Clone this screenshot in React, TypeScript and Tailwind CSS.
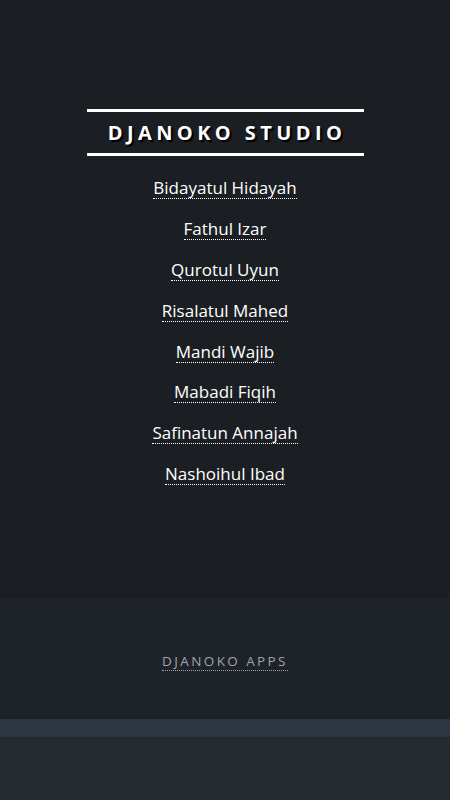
import React from 'react';

const books = [
    'Bidayatul Hidayah',
    'Fathul Izar',
    'Qurotul Uyun',
    'Risalatul Mahed',
    'Mandi Wajib',
    'Mabadi Fiqih',
    'Safinatun Annajah',
    'Nashoihul Ibad',
];

export default function App() {
    return (
        <div className="w-[450px] h-[800px] flex flex-col bg-[#262a31] font-['Open_Sans',sans-serif]">
            <main className="h-[598px] bg-[#1b1f23] flex flex-col items-center pt-[109px]">
                <h1 className="w-[277px] border-y-[3px] border-white py-[6px] text-center text-[20px] leading-[29px] font-bold text-white tracking-[4.4px] pl-[4px] [text-shadow:2px_2px_1px_#000]">
                    DJANOKO STUDIO
                </h1>
                <nav className="flex flex-col items-center gap-[18.9px] mt-[21px]">
                    {books.map((title) => (
                        <a
                            key={title}
                            href="#"
                            className="text-[17px] leading-[21px] text-white border-b border-dotted border-white"
                        >
                            {title}
                        </a>
                    ))}
                </nav>
            </main>
            <footer className="h-[121px] bg-[#1e232a] flex items-center justify-center pt-[6px]">
                <a
                    href="#"
                    className="text-[13.5px] leading-[18px] tracking-[2.4px] text-[#a0a4a8] border-b border-dotted border-[#a0a4a8]"
                >
                    DJANOKO APPS
                </a>
            </footer>
            <div className="h-[18px] bg-[#2d3540]" />
            <div className="flex-1 bg-[#262a31]" />
        </div>
    );
}
